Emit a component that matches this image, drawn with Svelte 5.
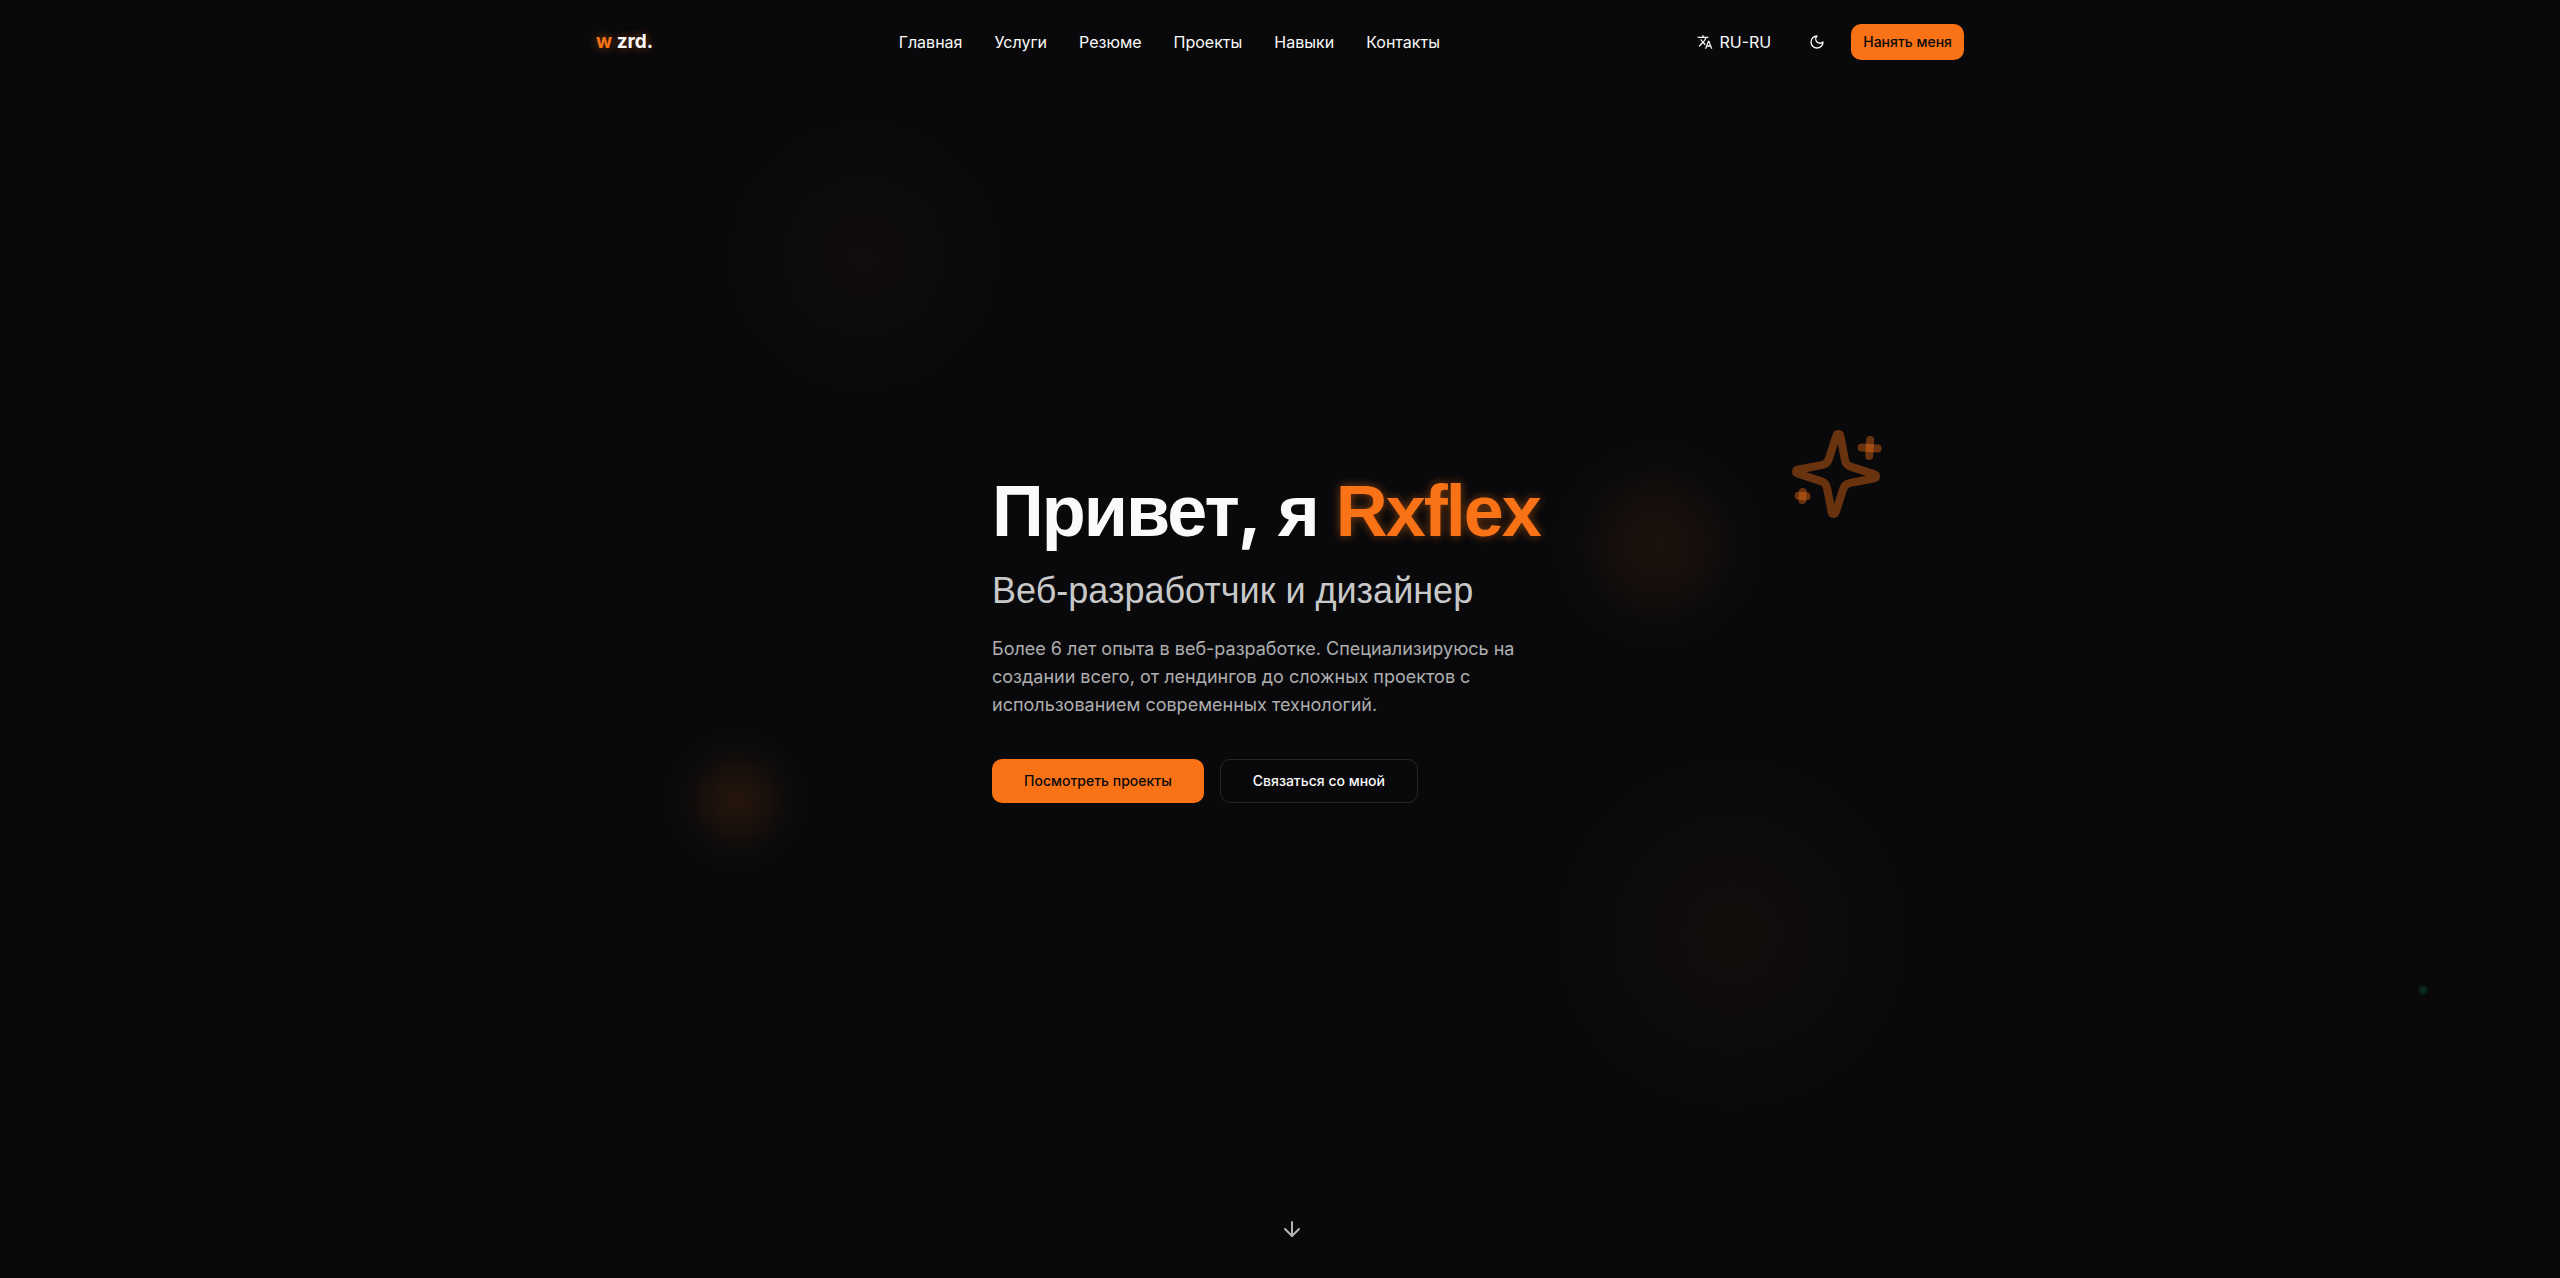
<script>
  const links = [
    ['Главная', '#home'],
    ['Услуги', '#services'],
    ['Резюме', '#resume'],
    ['Проекты', '#projects'],
    ['Навыки', '#skills'],
    ['Контакты', '#contacts']
  ];
</script>

<div class="page" id="home">
  <div class="glows" aria-hidden="true">
    <span class="glow far-left"></span>
    <span class="glow near-left"></span>
    <span class="glow title-side"></span>
    <span class="glow low-right"></span>
    <span class="dot"></span>
    <svg class="sparkles" viewBox="0 0 24 24">
      <path d="M9.937 15.5A2 2 0 0 0 8.5 14.063l-6.135-1.582a.5.5 0 0 1 0-.962L8.5 9.936A2 2 0 0 0 9.937 8.5l1.582-6.135a.5.5 0 0 1 .963 0L14.063 8.5A2 2 0 0 0 15.5 9.937l6.135 1.581a.5.5 0 0 1 0 .964L15.5 14.063a2 2 0 0 0-1.437 1.437l-1.582 6.135a.5.5 0 0 1-.963 0z" />
      <path d="M20 3v4" />
      <path d="M22 5h-4" />
      <path d="M4 17v2" />
      <path d="M5 18H3" />
    </svg>
  </div>

  <header>
    <div class="bar">
      <a class="logo" href="#home"><span>w</span> zrd.</a>
      <nav>
        {#each links as [label, href]}
          <a {href}>{label}</a>
        {/each}
      </nav>
      <div class="tools">
        <button class="lang">
          <svg viewBox="0 0 24 24" aria-hidden="true">
            <path d="M12.87 15.07l-2.54-2.51.03-.03A17.52 17.52 0 0 0 14.07 6H17V4h-7V2H8v2H1v2h11.17C11.5 7.92 10.44 9.75 9 11.35 8.07 10.32 7.3 9.19 6.69 8h-2c.73 1.63 1.73 3.17 2.98 4.56l-5.09 5.02L4 19l5-5 3.11 3.11.76-2.04zM18.5 10h-2L12 22h2l1.12-3h4.75L21 22h2l-4.5-12zm-2.62 7l1.62-4.33L19.12 17h-3.24z" />
          </svg>
          RU-RU
        </button>
        <button class="theme" aria-label="Сменить тему">
          <svg viewBox="0 0 24 24" aria-hidden="true"><path d="M12 3a6 6 0 0 0 9 9 9 9 0 1 1-9-9Z" /></svg>
        </button>
        <button class="primary">Нанять меня</button>
      </div>
    </div>
  </header>

  <main>
    <section class="hero">
      <h1>Привет<span class="comma">,</span> я <span class="name">Rxflex</span></h1>
      <h2>Веб-разработчик и дизайнер</h2>
      <p>Более 6 лет опыта в веб-разработке. Специализируюсь на создании всего, от лендингов до сложных проектов с использованием современных технологий.</p>
      <div class="actions">
        <button class="primary large">Посмотреть проекты</button>
        <button class="outline large">Связаться со мной</button>
      </div>
    </section>
  </main>

  <a class="down" href="#services" aria-label="Прокрутить вниз">
    <svg viewBox="0 0 24 24" aria-hidden="true"><path d="M12 5v14" /><path d="m19 12-7 7-7-7" /></svg>
  </a>
</div>

<style>
  :global(body) {
    background: #09090b;
  }
  .page {
    position: relative;
    display: flex;
    flex-direction: column;
    min-height: 100vh;
    overflow: hidden;
    background: #09090b;
    color: #fafafa;
    font-family: Inter, sans-serif;
    font-size: 16px;
    line-height: 24px;
  }
  a {
    color: inherit;
    text-decoration: none;
  }
  button {
    font: inherit;
    color: inherit;
    background: none;
    border: 0;
    padding: 0;
    cursor: pointer;
  }
  svg {
    display: block;
    fill: none;
    stroke: currentColor;
    stroke-width: 2;
    stroke-linecap: round;
    stroke-linejoin: round;
  }

  .glows {
    position: absolute;
    inset: 0;
    pointer-events: none;
  }
  .glow,
  .dot {
    position: absolute;
    border-radius: 50%;
    translate: -50% -50%;
  }
  .far-left {
    left: calc(50% - 416px);
    top: 256px;
    width: 280px;
    height: 280px;
    background: radial-gradient(closest-side, rgb(249 115 22 / 3%), transparent);
  }
  .near-left {
    left: calc(50% - 543px);
    top: 800px;
    width: 140px;
    height: 140px;
    background: radial-gradient(closest-side, rgb(249 115 22 / 12%), rgb(249 115 22 / 7%) 40%, rgb(249 115 22 / 2%) 70%, transparent);
  }
  .title-side {
    left: calc(50% + 378px);
    top: 545px;
    width: 210px;
    height: 210px;
    background: radial-gradient(closest-side, rgb(249 115 22 / 8%), rgb(249 115 22 / 5%) 40%, rgb(249 115 22 / 1%) 75%, transparent);
  }
  .low-right {
    left: calc(50% + 452px);
    top: 934px;
    width: 360px;
    height: 360px;
    background: radial-gradient(closest-side, rgb(249 115 22 / 4%), transparent);
  }
  .dot {
    left: calc(50% + 1143px);
    top: 990px;
    width: 12px;
    height: 12px;
    background: radial-gradient(closest-side, #082c1f 30%, transparent);
  }
  .sparkles {
    position: absolute;
    left: calc(50% + 508px);
    top: 426px;
    width: 96px;
    height: 96px;
    rotate: 3.5deg;
    stroke: rgb(249 115 22 / 40%);
  }

  header {
    position: absolute;
    inset: 0 0 auto;
  }
  .bar {
    display: grid;
    grid-template-columns: auto auto auto;
    justify-content: space-between;
    align-items: center;
    max-width: 1368px;
    margin: 0 auto;
    padding: 24px 16px;
  }
  .logo {
    font-size: 19px;
    font-weight: 700;
    line-height: 28px;
    text-shadow: 0 0 10px rgb(249 115 22 / 50%);
  }
  .logo span {
    color: #f97316;
  }
  nav {
    display: flex;
    gap: 32px;
  }
  .tools {
    display: flex;
    align-items: center;
    gap: 16px;
  }
  .lang {
    display: flex;
    align-items: center;
    gap: 6px;
    padding: 0 12px;
  }
  .lang svg {
    width: 16px;
    height: 16px;
    fill: currentColor;
    stroke: none;
  }
  .theme {
    padding: 10px;
  }
  .theme svg {
    width: 16px;
    height: 16px;
  }
  .primary,
  .outline {
    height: 36px;
    padding: 0 12px;
    border-radius: 10px;
    font-size: 14px;
    font-weight: 500;
    line-height: 20px;
  }
  .primary {
    background: #f97316;
    color: #09090b;
  }
  .outline {
    border: 1px solid #27272a;
  }
  .large {
    height: 44px;
    padding: 0 32px;
  }

  main {
    flex: 1;
    display: flex;
    align-items: center;
    justify-content: center;
  }
  .hero {
    width: 100%;
    max-width: 576px;
  }
  h1,
  h2,
  p {
    margin: 0 0 24px;
  }
  h1,
  h2 {
    font-family: "Liberation Sans", sans-serif;
  }
  h1 {
    font-size: 72px;
    line-height: 72px;
    font-weight: 700;
    letter-spacing: -2px;
  }
  .comma {
    font-family: Inter, sans-serif;
    line-height: 0;
  }
  .name {
    color: #f97316;
    text-shadow: 0 0 10px rgb(249 115 22 / 50%);
  }
  h2 {
    font-size: 36px;
    line-height: 40px;
    font-weight: 400;
    color: #c8c8c9;
  }
  p {
    margin-bottom: 40px;
    font-size: 18px;
    line-height: 28px;
    color: #aeaeaf;
  }
  .actions {
    display: flex;
    gap: 16px;
  }

  .down {
    position: absolute;
    left: 50%;
    bottom: 37px;
    color: #b4b4b5;
  }
  .down svg {
    width: 24px;
    height: 24px;
  }
</style>
